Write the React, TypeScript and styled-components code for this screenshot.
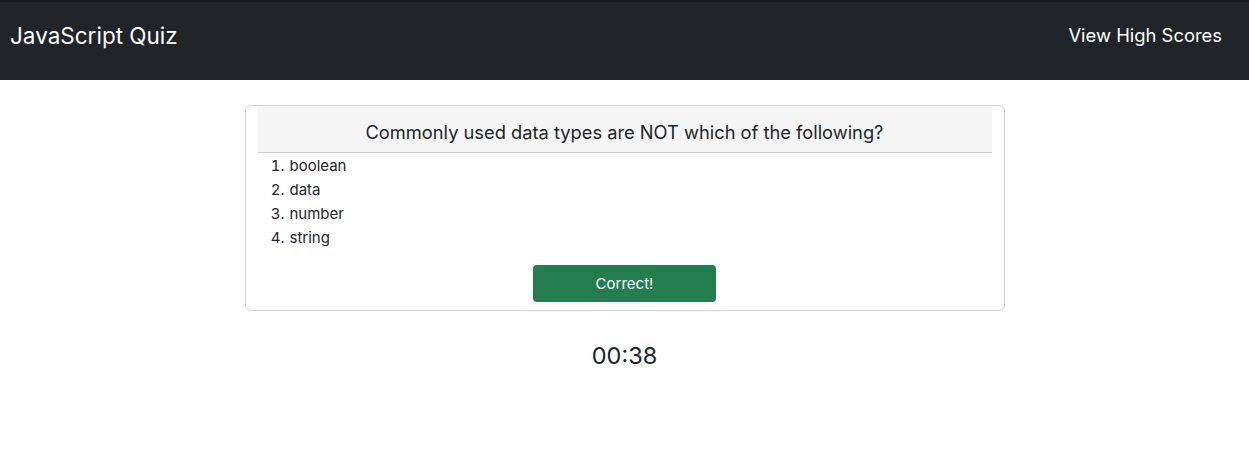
import React from "react";
import styled, { createGlobalStyle } from "styled-components";

const Global = createGlobalStyle`
  html, body { margin: 0; padding: 0; background: #fff; }
  body { font-family: Inter, "Liberation Sans", Arial, sans-serif; color: #212529; }
  * { box-sizing: border-box; }
`;

const Navbar = styled.header`
  height: 80px;
  background: #212529;
  border-top: 2px solid #16181b;
  display: flex;
  align-items: center;
  justify-content: space-between;
  padding: 0 27px 12px 10px;
  color: #fff;
`;

const Brand = styled.div`
  font-size: 22.5px;
  color: #fff;
`;

const NavLink = styled.a`
  font-size: 18.4px;
  color: #fff;
  text-decoration: none;
`;

const Main = styled.main`
  display: flex;
  flex-direction: column;
  align-items: center;
  padding-top: 25px;
`;

const Card = styled.section`
  width: 760px;
  border: 1px solid #cfcfcf;
  border-radius: 6px;
  padding: 1px 12px 8px 12px;
  display: flex;
  flex-direction: column;
  align-items: center;
`;

const Question = styled.h2`
  align-self: stretch;
  margin: 0;
  height: 46px;
  background: #f5f5f5;
  border-bottom: 1px solid #cdcdcd;
  display: flex;
  align-items: center;
  justify-content: center;
  font-size: 18.3px;
  font-weight: 400;
  color: #212529;
  padding-top: 4px;
`;

const Options = styled.ol`
  align-self: stretch;
  margin: 0;
  padding: 1px 0 0 31px;
  font-size: 15px;
  line-height: 24px;
`;

const Option = styled.li`
  padding-left: 1px;
`;

const Feedback = styled.button`
  margin-top: 15px;
  width: 183px;
  height: 37px;
  background: #237d4e;
  color: #fff;
  border: none;
  border-radius: 4px;
  font-family: inherit;
  font-size: 15px;
`;

const Timer = styled.div`
  margin-top: 30px;
  font-size: 23.5px;
  color: #212529;
`;

export default function App() {
  const options = ["boolean", "data", "number", "string"];
  return (
    <>
      <Global />
      <Navbar>
        <Brand>JavaScript Quiz</Brand>
        <NavLink href="#">View High Scores</NavLink>
      </Navbar>
      <Main>
        <Card>
          <Question>Commonly used data types are NOT which of the following?</Question>
          <Options>
            {options.map((o) => (
              <Option key={o}>{o}</Option>
            ))}
          </Options>
          <Feedback>Correct!</Feedback>
        </Card>
        <Timer>00:38</Timer>
      </Main>
    </>
  );
}
